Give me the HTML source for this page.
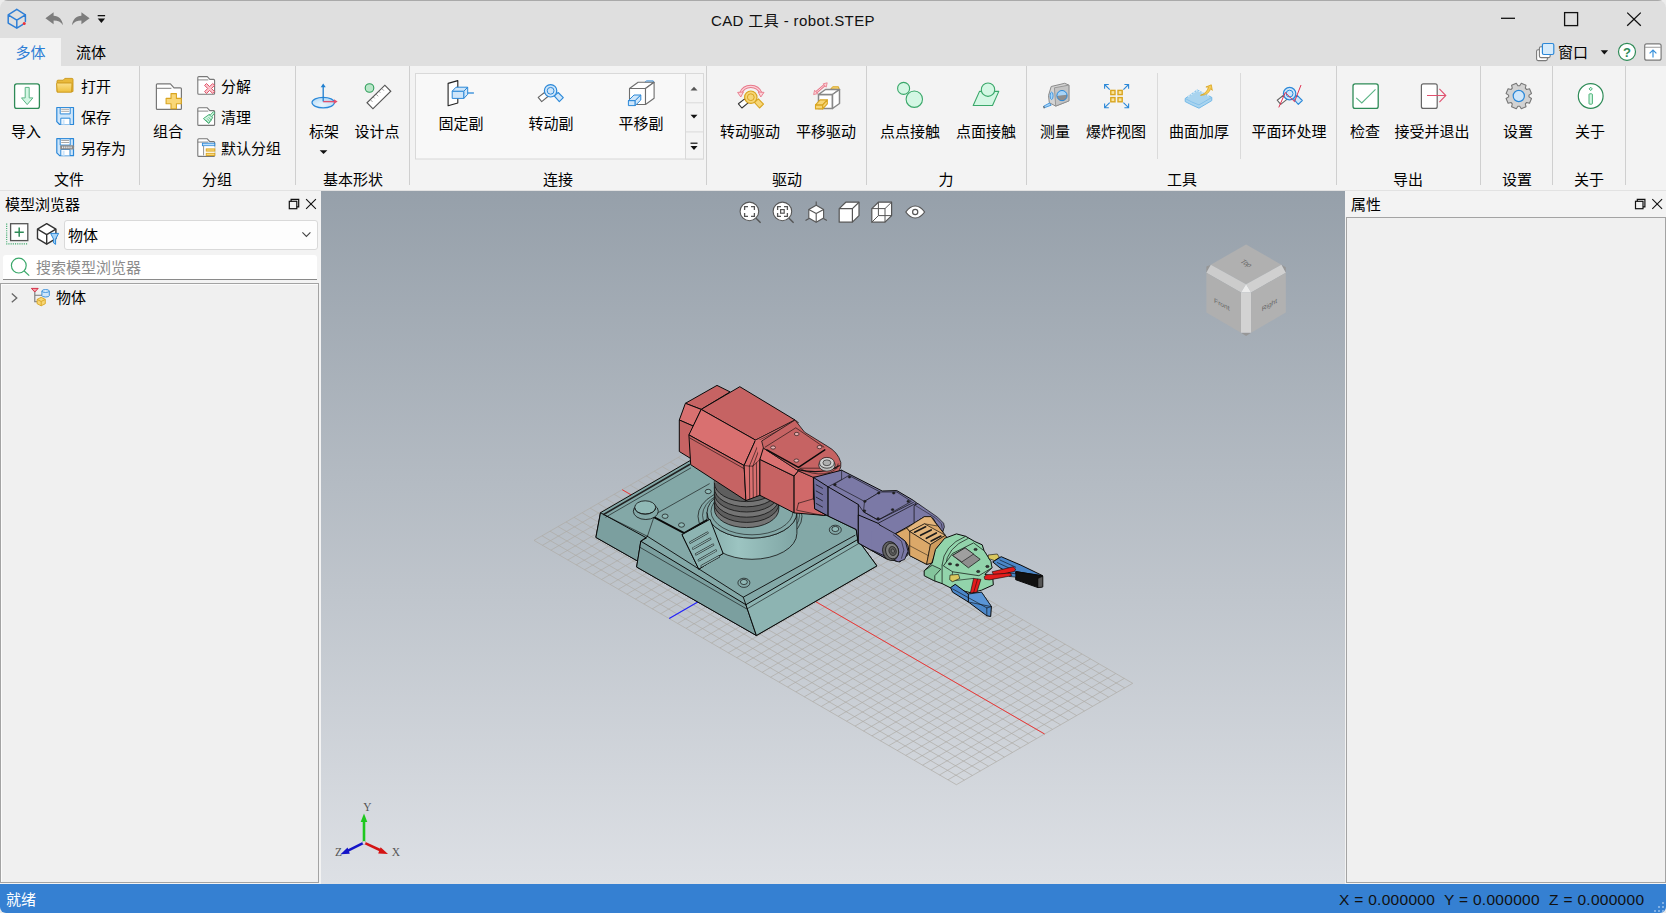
<!DOCTYPE html>
<html lang="zh-CN">
<head>
<meta charset="utf-8">
<title>CAD 工具 - robot.STEP</title>
<style>
*{box-sizing:border-box;margin:0;padding:0}
html{width:1666px;height:913px;overflow:hidden;background:#ececec}
body{width:1666px;height:913px;overflow:hidden;background:#f3f3f3;clip-path:inset(0 round 8px 8px 6px 6px)}
body{font-family:"Liberation Sans","Noto Sans CJK SC",sans-serif;font-size:15px;color:#000;position:relative}
.abs{position:absolute}
#titlebar{left:0;top:0;width:1666px;height:66px;background:#dfdfdf}
#topline{left:0;top:0;width:1666px;height:1px;background:#a9a9a9}
#title{left:711px;top:10px;letter-spacing:0.38px;width:161px;height:22px;line-height:22px;font-size:15px;text-align:center;white-space:nowrap;color:#111}
#tab1{left:0;top:38px;width:61px;height:28px;padding-top:1px;background:#f3f3f3;color:#2f7fd6;text-align:center;line-height:28px}
#tab2{left:61px;top:38px;width:60px;height:28px;padding-top:1px;text-align:center;line-height:28px}
#ribbon{left:0;top:66px;width:1666px;height:124px;background:#f3f3f3}
#ribline{left:0;top:190px;width:1666px;height:1px;background:#e2e2e2}
.sep{position:absolute;top:66px;width:1px;height:119px;background:#cfcfcf}
.sep2{position:absolute;top:73px;width:1px;height:86px;background:#dadada}
.lbl{position:absolute;white-space:nowrap;line-height:20px;height:20px;transform:translateX(-50%);text-align:center}
.sl{position:absolute;white-space:nowrap;line-height:20px;height:20px}
.ic{position:absolute;overflow:visible}
#leftp{left:0;top:191px;width:321px;height:693px;background:#f3f3f3}
#rightp{left:1346px;top:191px;width:320px;height:693px;background:#f3f3f3}
#view{left:321px;top:191px;width:1024px;height:693px;background:linear-gradient(#96a0aa,#dde0e5);overflow:hidden}
#status{left:0;top:884px;width:1666px;height:29px;background:#3580d2;color:#fff}
</style>
</head>
<body>
<div id="titlebar" class="abs"></div>
<div id="topline" class="abs"></div>
<div id="title" class="abs">CAD 工具 - robot.STEP</div>
<div id="tab1" class="abs">多体</div>
<div id="tab2" class="abs">流体</div>
<div id="ribbon" class="abs"></div>
<div id="ribline" class="abs"></div>
<!--RIBBON-->
<!--RIBBON-ICONS-->
<svg class="abs" style="left:0;top:0" width="1666" height="191" viewBox="0 0 1666 191">
<g fill="none" stroke="#2f7fd6" stroke-width="1.5" stroke-linejoin="round" stroke-linecap="round"><path d="M16.8 9.4l8.6 5.5v6.5M22.6 24.6l-5.800 3.600l-8.600-5.100v-8.200l8.600-5.500M8.200 14.900l8.600 5.300l8.600-5.300M16.800 20.200v8"/></g><circle cx="24.200" cy="23.500" r="1.500" fill="#e8303a"/>
<path d="M45.400 18.200l8.200-6v3.600c5.200 0.200 8.600 3.600 9.400 9.400c-2.200-3.400-5-4.800-9.400-4.800v3.800z" fill="#7d7d7d"/>
<path d="M89.600 18.200l-8.200-6v3.600c-5.200 0.200-8.600 3.600-9.400 9.400c2.200-3.400 5-4.800 9.400-4.800v3.800z" fill="#7d7d7d"/>
<rect x="97.700" y="15" width="7.400" height="1.300" fill="#111"/><path d="M97.700 18.600h7.400l-3.700 4.400z" fill="#111"/>
<path d="M1501 18.300h14" stroke="#111" stroke-width="1.300"/>
<rect x="1564.600" y="12.600" width="13" height="13" fill="none" stroke="#111" stroke-width="1.300"/>
<path d="M1627.200 12.600l13.600 13.200M1640.800 12.600l-13.600 13.200" stroke="#111" stroke-width="1.300"/>
<g stroke="#7a7a7a" fill="#fff" stroke-width="1.100"><rect x="1536.600" y="49.800" width="10.800" height="10.800" rx="1.500"/><rect x="1539.400" y="46.800" width="10.800" height="10.800" rx="1.500"/></g>
<rect x="1542.400" y="43.500" width="11.400" height="11" rx="1.500" fill="#d6ebfb" stroke="#2b88d8" stroke-width="1.200"/>
<path d="M1600.700 50.200h7.400l-3.700 4.200z" fill="#111"/>
<circle cx="1627" cy="51.800" r="8.500" fill="#fff" stroke="#2e8b57" stroke-width="1.200"/>
<text x="1627" y="56.600" font-family="Liberation Sans, sans-serif" font-weight="bold" font-size="13" fill="#2e8b57" text-anchor="middle">?</text>
<rect x="1644.700" y="43.800" width="16.400" height="16.400" rx="2" fill="#fff" stroke="#7a7a7a" stroke-width="1.200"/><path d="M1645 47.200h16" stroke="#9a9a9a" stroke-width="1.100"/>
<path d="M1653 57.500v-7.500M1649.600 53.400l3.400-3.400l3.400 3.400" fill="none" stroke="#3a92dc" stroke-width="1.200"/>
<rect x="14.600" y="83.800" width="24.800" height="24.600" rx="2.200" fill="#fff" stroke="#2e8b57" stroke-width="1.300"/>
<path d="M25.200 87.400h4v10.500h3.700l-5.700 6.700l-5.700-6.700h3.700z" fill="#d4f7e4" stroke="#5cb586" stroke-width="1"/>
<defs><linearGradient id="fg" x1="0" y1="0" x2="0" y2="1"><stop offset="0" stop-color="#fbe08a"/><stop offset="1" stop-color="#eebf3c"/></linearGradient></defs>
<path d="M57 91.600v-10.400q0-1 1-1h5.200l1.600-1.800h7.200q1 0 1 1v12.200z" fill="#e9b93a" stroke="#c9961a" stroke-width="0.900"/><path d="M57.200 92.200l-0.600-8.400q0-0.800 0.800-0.800h13.800q0.800 0 0.800 0.800l-0.400 8.400z" fill="url(#fg)" stroke="#c9961a" stroke-width="0.900"/>
<path d="M56.800 107.5h16.700v17h-13.900l-2.800-2.800z" fill="#cfe6fa" stroke="#2b88d8" stroke-width="1.200" stroke-linejoin="round"/>
<path d="M60.200 107.6h10v6.300h-10z" fill="#fff" stroke="#2b88d8" stroke-width="1"/><path d="M61.200 109.3h8M61.200 111.3h8" stroke="#a8a8a8" stroke-width="1"/>
<path d="M60.800 124.4v-6.200h9.200v6.200" fill="#fff" stroke="#2b88d8" stroke-width="1"/><rect x="62.600" y="119.6" width="2" height="4.800" fill="#cfe6fa"/>
<path d="M56.800 138.7h16.700v17h-13.900l-2.800-2.800z" fill="#cfe6fa" stroke="#2b88d8" stroke-width="1.200" stroke-linejoin="round"/>
<path d="M60.200 138.79999999999998h10v6.300h-10z" fill="#fff" stroke="#2b88d8" stroke-width="1"/><path d="M61.200 140.5h8M61.200 142.5h8" stroke="#a8a8a8" stroke-width="1"/>
<path d="M60.800 155.6v-6.200h9.200v6.200" fill="#fff" stroke="#2b88d8" stroke-width="1"/><rect x="62.600" y="150.79999999999998" width="2" height="4.800" fill="#cfe6fa"/>
<rect x="60.200" y="145.2" width="13.800" height="4.400" rx="1" fill="#8a8a8a"/><path d="M62 147.39999999999998h10.500" stroke="#e8e8e8" stroke-width="1.600" stroke-dasharray="1.300 0.800"/>
<path d="M156.4 108.4v-23.6q0-1 1-1h13l3.6 4h6.4q1 0 1 1v19.6q0 1-1 1h-23q-1 0-1-1z" fill="#fff" stroke="#777" stroke-width="1.2" stroke-linejoin="round"/><path d="M156.4 88.3h15" stroke="#777" stroke-width="0.96" fill="none"/>
<path d="M171 93.600h5.400v4.800h4.900v5.400h-4.900v4.900h-5.400v-4.900h-4.900v-5.400h4.900z" fill="#f9d778" stroke="#d9a520" stroke-width="1.100" stroke-linejoin="round"/>
<path d="M197.8 93.19999999999999v-15.600000000000001q0-1 1-1h8.5l2.5 2.8h3.8q1 0 1 1v12.8q0 1-1 1h-14.8q-1 0-1-1z" fill="#fff" stroke="#777" stroke-width="1.1" stroke-linejoin="round"/><path d="M197.8 79.89999999999999h10.5" stroke="#777" stroke-width="0.88" fill="none"/>
<path d="M204.600 85.400l1.900-1.900l3.100 3.100l3.100-3.100l1.900 1.900l-3.100 3.100l3.100 3.100l-1.900 1.900l-3.100-3.100l-3.100 3.100l-1.900-1.900l3.100-3.100z" fill="#f9c6cd" stroke="#e0455e" stroke-width="0.900" stroke-linejoin="round"/>
<path d="M197.8 124.4v-15.600000000000001q0-1 1-1h8.5l2.5 2.8h3.8q1 0 1 1v12.8q0 1-1 1h-14.8q-1 0-1-1z" fill="#fff" stroke="#777" stroke-width="1.1" stroke-linejoin="round"/><path d="M197.8 111.1h10.5" stroke="#777" stroke-width="0.88" fill="none"/>
<path d="M203.400 118.600l5.600-4l1.400 0.300l3-3.200l1.400 1.200l-2.800 3.400l0.600 1.400l-3.800 5.800z" fill="#d4f7e4" stroke="#3aa86a" stroke-width="0.900" stroke-linejoin="round"/><path d="M205.400 119.600l3.200 3.400M207 118.400l3 3.400M208.600 117.200l2.800 3.200M209 114.600l3.200 2.800" stroke="#3aa86a" stroke-width="0.700"/>
<path d="M197.8 155.4v-15.600000000000001q0-1 1-1h8.5l2.5 2.8h3.8q1 0 1 1v12.8q0 1-1 1h-14.8q-1 0-1-1z" fill="#fff" stroke="#777" stroke-width="1.1" stroke-linejoin="round"/><path d="M197.8 142.10000000000002h10.5" stroke="#777" stroke-width="0.88" fill="none"/>
<rect x="202.400" y="143.200" width="12.400" height="2.600" fill="#bfe0fa" stroke="#2b88d8" stroke-width="0.900"/><rect x="202.400" y="146.400" width="12.400" height="9" fill="#fff"/><path d="M203.600 146v9.400" stroke="#777" stroke-width="0.800"/>
<rect x="206.200" y="148.900" width="8.600" height="2.200" fill="#f9d778" stroke="#d9a520" stroke-width="0.900"/><rect x="206.200" y="153.300" width="8.600" height="2.200" fill="#f9d778" stroke="#d9a520" stroke-width="0.900"/>
<defs><radialGradient id="eg" cx="0.45" cy="0.700" r="0.700"><stop offset="0" stop-color="#eaf5fd"/><stop offset="1" stop-color="#b4dbf7"/></radialGradient></defs>
<ellipse cx="323.200" cy="102.600" rx="11.200" ry="5.300" fill="url(#eg)" stroke="#2b88d8" stroke-width="1.200"/>
<path d="M323.200 101.600v-15.500" stroke="#1f7fd0" stroke-width="1.300"/><path d="M320.700 87.200h5l-2.500-3.800z" fill="#1f7fd0"/>
<path d="M323.200 101.600h11.500" stroke="#e0506e" stroke-width="1.400"/><path d="M334 99.200v4.800l3.600-2.400z" fill="#e0506e"/>
<path d="M319.700 150.200h7.700l-3.850 3.900z" fill="#111"/>
<circle cx="369.500" cy="88" r="4.300" fill="#b8e6c8" stroke="#2e9e5a" stroke-width="1.100"/>
<g transform="translate(378.900 97) rotate(-44.600)"><rect x="-12.500" y="-4.200" width="25" height="8.400" fill="#fff" stroke="#555" stroke-width="1.200"/><path d="M-8 -4v3M-4 -4v2M0 -4v3M4 -4v2M8 -4v3" stroke="#777" stroke-width="0.700"/></g>
<rect x="415.500" y="73.500" width="288" height="85.500" fill="#f8f8f8" stroke="#d9d9d9" stroke-width="1"/>
<rect x="685.500" y="73.500" width="18" height="85.500" fill="#f4f4f4" stroke="#d9d9d9" stroke-width="1"/><path d="M685.500 102.800h18M685.500 131.900h18" stroke="#d9d9d9" stroke-width="1"/>
<path d="M690.500 90.400h7l-3.500-3.600z" fill="#555"/><path d="M690.500 114.800h7l-3.500 3.600z" fill="#111"/><rect x="690.500" y="142.600" width="7" height="1.200" fill="#111"/><path d="M690.500 146.100h7l-3.500 3.800z" fill="#111"/>
<path d="M448.100 83.400l9.700-2.800v22.400l-9.700 2.800z" fill="#fff" stroke="#222" stroke-width="1.100" stroke-linejoin="round"/>
<g fill="#cfe6fa" stroke="#2b88d8" stroke-width="1" stroke-linejoin="round"><path d="M452.200 91.200h11.700v7.200h-11.700z"/><path d="M452.200 91.200l3.800-4h11.700l-3.800 4z"/><path d="M463.900 91.200l3.800-4v7.100l-3.800 4.100z"/><path d="M467.700 93h6.200" stroke-width="1.300"/></g>
<path d="M538.2 97.39999999999999l6.300-4.900l3.400 4l-6.200 5.100z" fill="#fff" stroke="#666" stroke-width="1.100" stroke-linejoin="round"/>
<path d="M554.2 95.89999999999999l4-3.400l5.100 5.200l-4 3.900z" fill="#cfe6fa" stroke="#2b88d8" stroke-width="1.100" stroke-linejoin="round"/>
<circle cx="550.6" cy="90.8" r="6.200" fill="#cfe6fa" stroke="#2b88d8" stroke-width="1.200"/><circle cx="550.6" cy="90.8" r="3.400" fill="#cfe6fa" stroke="#2b88d8" stroke-width="1"/>
<path d="M644.800 82.400l1.800-1.500h6.600l0.600 2.200z" fill="#cfe6fa" stroke="#2b88d8" stroke-width="0.900"/>
<g fill="#fff" stroke="#6e6e6e" stroke-width="1.1" stroke-linejoin="round"><path d="M629.5 88.5h16v16h-16z"/><path d="M629.5 88.5l8.6 -6.2h16l-8.6 6.2z"/><path d="M645.5 88.5l8.6 -6.2v16l-8.6 6.2z"/></g>
<g fill="#cfe6fa" stroke="#2b88d8" stroke-width="1" stroke-linejoin="round"><path d="M628.4 100.6h6.8v5h-6.8z"/><path d="M628.4 100.6l5.6 -5.6h6.8l-5.6 5.6z"/><path d="M635.1999999999999 100.6l5.6 -5.6v5l-5.6 5.6z"/></g>
<path d="M740.600 93.400a10.900 10.900 0 0 1 20.400 0" fill="none" stroke="#e8788a" stroke-width="3.200"/><path d="M740.600 93.400a10.900 10.900 0 0 1 20.400 0" fill="none" stroke="#fbd3d8" stroke-width="1.400"/>
<path d="M737.600 92.400l5.800-0.400l-2.600 5z" fill="#fbd3d8" stroke="#e8788a" stroke-width="0.900"/><path d="M764 92.400l-5.800-0.400l2.600 5z" fill="#fbd3d8" stroke="#e8788a" stroke-width="0.900"/>
<path d="M738.4 103.8l6.300-4.900l3.400 4l-6.200 5.100z" fill="#fff" stroke="#333" stroke-width="1.100" stroke-linejoin="round"/>
<path d="M754.4 102.3l4-3.400l5.100 5.200l-4 3.900z" fill="#f7d677" stroke="#d9a520" stroke-width="1.100" stroke-linejoin="round"/>
<circle cx="750.8" cy="97.2" r="6.200" fill="#f7d677" stroke="#d9a520" stroke-width="1.200"/><circle cx="750.8" cy="97.2" r="3.400" fill="#f7d677" stroke="#d9a520" stroke-width="1"/>
<path d="M830.800 89l1.800-2.200h5.900l0.700 2.700z" fill="#f7d677" stroke="#d9a520" stroke-width="1"/>
<g fill="#fff" stroke="#888" stroke-width="1.5" stroke-linejoin="round"><path d="M818.5 94.5h14v14h-14z"/><path d="M818.5 94.5l7 -5h14l-7 5z"/><path d="M832.5 94.5l7 -5v14l-7 5z"/></g>
<g fill="#f7d677" stroke="#d9a520" stroke-width="1.1" stroke-linejoin="round"><path d="M815.5 104.9h7.2v4h-7.2z"/><path d="M815.5 104.9l4.6 -5h7.2l-4.6 5z"/><path d="M822.7 104.9l4.6 -5v4l-4.6 5z"/></g>
<path d="M815.400 93l10-8.600" stroke="#e8788a" stroke-width="2.600"/><path d="M815.400 93l10-8.600" stroke="#fbd3d8" stroke-width="1"/><path d="M813.600 94.600l1-4.400l3 3.400z" fill="#fbd3d8" stroke="#e8788a" stroke-width="0.800"/><path d="M827.200 82.800l-1 4.400l-3-3.400z" fill="#fbd3d8" stroke="#e8788a" stroke-width="0.800"/>
<circle cx="903.600" cy="88.400" r="6" fill="#d4f7e4" stroke="#3aa86a" stroke-width="1.100"/><circle cx="914.300" cy="99.200" r="8.200" fill="#d4f7e4" stroke="#3aa86a" stroke-width="1.100"/>
<path d="M973.200 105.500l6.300-14.100h19.300l-6.300 14.100z" fill="#d4f7e4" stroke="#3aa86a" stroke-width="1.100" stroke-linejoin="round"/><circle cx="988" cy="89.700" r="6.700" fill="#d4f7e4" stroke="#3aa86a" stroke-width="1.100"/>
<path d="M1048.500 95.500l2.700-9l13.500-3.200l4.200 1.800v15.800l-13.200 5.200l-6.400-3.400z" fill="#d4d4d4" stroke="#8a8a8a" stroke-width="1" stroke-linejoin="round"/>
<path d="M1054.400 87.800l14.500-2.700v15.800l-13.200 5.200z" fill="#c4c4c4" stroke="#8a8a8a" stroke-width="0.800" stroke-linejoin="round"/>
<circle cx="1062" cy="95.600" r="5.100" fill="#8e8e8e"/><path d="M1056.900 95.900a5.100 5.100 0 0 1 10.200-1.200q-5 0.200-10.200 1.200z" fill="#a8d4f7"/><circle cx="1062" cy="95.600" r="5.100" fill="none" stroke="#2b88d8" stroke-width="1"/>
<ellipse cx="1051.600" cy="95.800" rx="1.500" ry="3.700" fill="#a8d4f7" stroke="#2b88d8" stroke-width="0.800"/>
<path d="M1049.600 103l-6 3.200l0.600 1.600l7-2.600z" fill="#a8d4f7" stroke="#2b88d8" stroke-width="0.800"/><path d="M1043.600 106.200l0.800 2" stroke="#666" stroke-width="1.200"/>
<rect x="1110.8" y="90.4" width="4.200" height="4.200" fill="#fbe49a" stroke="#d9a520" stroke-width="1.400"/>
<rect x="1118" y="90.4" width="4.200" height="4.200" fill="#fbe49a" stroke="#d9a520" stroke-width="1.400"/>
<rect x="1110.8" y="97.6" width="4.200" height="4.200" fill="#fbe49a" stroke="#d9a520" stroke-width="1.400"/>
<rect x="1118" y="97.6" width="4.200" height="4.200" fill="#fbe49a" stroke="#d9a520" stroke-width="1.400"/>
<path d="M1109.7 89.6L1104.6 84.5M1108.8 84.5H1104.6V88.7" fill="none" stroke="#2b88d8" stroke-width="1.100"/>
<path d="M1123.4 89.6L1128.6 84.5M1124.3999999999999 84.5H1128.6V88.7" fill="none" stroke="#2b88d8" stroke-width="1.100"/>
<path d="M1109.7 102.6L1104.6 107.7M1108.8 107.7H1104.6V103.5" fill="none" stroke="#2b88d8" stroke-width="1.100"/>
<path d="M1123.4 102.6L1128.6 107.7M1124.3999999999999 107.7H1128.6V103.5" fill="none" stroke="#2b88d8" stroke-width="1.100"/>
<path d="M1185.200 98.500l12-8.600q6 3.200 14.600 7.500v3.200l-12.800 7.600q-7-3-13.800-6.600z" fill="#a9d4ef" stroke="#6ab4e6" stroke-width="0.900" stroke-linejoin="round"/>
<path d="M1185.200 98.500q6.400 3.800 13.800 6.400l12.800-7.500" fill="none" stroke="#7cbde8" stroke-width="0.800"/><path d="M1188 96.600l9.300-6.400l11.500 6" fill="none" stroke="#d9edfa" stroke-width="1.200" stroke-dasharray="2 1.200"/>
<path d="M1200.500 95.300q6.500-2 8-8.300h-2.600l5.400-2.200l1 5.600l-1.600-1.800q-2 6.600-10.200 6.700z" fill="#f7cc55" stroke="#d9a520" stroke-width="0.800" stroke-linejoin="round"/>
<path d="M1277.1999999999998 100.19999999999999l6.300-4.900l3.400 4l-6.200 5.100z" fill="#fff" stroke="#666" stroke-width="1.100" stroke-linejoin="round"/>
<path d="M1293.1999999999998 98.69999999999999l4-3.400l5.100 5.200l-4 3.900z" fill="#cfe6fa" stroke="#2b88d8" stroke-width="1.100" stroke-linejoin="round"/>
<circle cx="1289.6" cy="93.6" r="6.200" fill="#cfe6fa" stroke="#2b88d8" stroke-width="1.200"/><circle cx="1289.6" cy="93.6" r="3.400" fill="#cfe6fa" stroke="#2b88d8" stroke-width="1"/>
<path d="M1278.800 107.400l6.500-14.900l9.200 9.200l6.500-16.700" fill="none" stroke="#e03050" stroke-width="1"/>
<rect x="1353" y="83.800" width="25.200" height="24.600" rx="2.200" fill="#fff" stroke="#2e8b57" stroke-width="1.300"/><path d="M1356.200 97.800l5.600 5.200l13.700-13.600" fill="none" stroke="#5cb586" stroke-width="1.100"/>
<rect x="1421.400" y="83.800" width="15.800" height="24.600" rx="2" fill="#fff" stroke="#666" stroke-width="1.200"/><path d="M1427 95.500h18.300M1439.400 88.800l6.400 6.700l-6.400 6.700" fill="none" stroke="#e0506e" stroke-width="1.100"/>
<path d="M1531.5 98.5L1529.5 103.2L1526.6 102.5L1525.3 103.8L1526.0 106.7L1521.3 108.7L1519.7 106.2L1517.9 106.2L1516.3 108.7L1511.6 106.7L1512.3 103.8L1511.0 102.5L1508.1 103.2L1506.1 98.5L1508.6 96.9L1508.6 95.1L1506.1 93.5L1508.1 88.8L1511.0 89.5L1512.3 88.2L1511.6 85.3L1516.3 83.3L1517.9 85.8L1519.7 85.8L1521.3 83.3L1526.0 85.3L1525.3 88.2L1526.6 89.5L1529.5 88.8L1531.5 93.5L1529.0 95.1L1529.0 96.9Z" fill="#d2d2d2" stroke="#777" stroke-width="1.100" stroke-linejoin="round"/><circle cx="1518.800" cy="96" r="5.600" fill="#cfe6fa" stroke="#2b88d8" stroke-width="1.200"/>
<circle cx="1590.700" cy="96" r="12.400" fill="#fff" stroke="#2e8b57" stroke-width="1.200"/><rect x="1589" y="93.800" width="3.400" height="10.400" rx="0.800" fill="#d4f7e4" stroke="#3aa86a" stroke-width="0.900"/><path d="M1590.700 87.200l1.600 1.700l-1.600 1.700l-1.600-1.700z" fill="#d4f7e4" stroke="#3aa86a" stroke-width="0.900"/>
</svg>
<!--/RIBBON-ICONS-->
<div class="sep" style="left:139px"></div>
<div class="sep" style="left:295px"></div>
<div class="sep" style="left:409px"></div>
<div class="sep" style="left:706px"></div>
<div class="sep" style="left:866px"></div>
<div class="sep" style="left:1026px"></div>
<div class="sep" style="left:1336px"></div>
<div class="sep" style="left:1480px"></div>
<div class="sep" style="left:1552px"></div>
<div class="sep" style="left:1625px"></div>
<div class="sep2" style="left:1157px"></div>
<div class="sep2" style="left:1240px"></div>
<div class="lbl" style="left:26px;top:122px">导入</div>
<div class="lbl" style="left:168px;top:122px">组合</div>
<div class="lbl" style="left:324px;top:122px">标架</div>
<div class="lbl" style="left:377px;top:122px">设计点</div>
<div class="lbl" style="left:750px;top:122px">转动驱动</div>
<div class="lbl" style="left:826px;top:122px">平移驱动</div>
<div class="lbl" style="left:910px;top:122px">点点接触</div>
<div class="lbl" style="left:986px;top:122px">点面接触</div>
<div class="lbl" style="left:1055px;top:122px">测量</div>
<div class="lbl" style="left:1116px;top:122px">爆炸视图</div>
<div class="lbl" style="left:1199px;top:122px">曲面加厚</div>
<div class="lbl" style="left:1289px;top:122px">平面环处理</div>
<div class="lbl" style="left:1365px;top:122px">检查</div>
<div class="lbl" style="left:1432px;top:122px">接受并退出</div>
<div class="lbl" style="left:1518px;top:122px">设置</div>
<div class="lbl" style="left:1590px;top:122px">关于</div>
<div class="lbl" style="left:461px;top:114px">固定副</div>
<div class="lbl" style="left:551px;top:114px">转动副</div>
<div class="lbl" style="left:641px;top:114px">平移副</div>
<div class="sl" style="left:81px;top:77px">打开</div>
<div class="sl" style="left:81px;top:108px">保存</div>
<div class="sl" style="left:81px;top:139px">另存为</div>
<div class="sl" style="left:221px;top:77px">分解</div>
<div class="sl" style="left:221px;top:108px">清理</div>
<div class="sl" style="left:221px;top:139px">默认分组</div>
<div class="lbl" style="left:69px;top:170px">文件</div>
<div class="lbl" style="left:217px;top:170px">分组</div>
<div class="lbl" style="left:353px;top:170px">基本形状</div>
<div class="lbl" style="left:558px;top:170px">连接</div>
<div class="lbl" style="left:787px;top:170px">驱动</div>
<div class="lbl" style="left:946px;top:170px">力</div>
<div class="lbl" style="left:1182px;top:170px">工具</div>
<div class="lbl" style="left:1408px;top:170px">导出</div>
<div class="lbl" style="left:1517px;top:170px">设置</div>
<div class="lbl" style="left:1589px;top:170px">关于</div>
<div id="leftp" class="abs"></div>
<div id="rightp" class="abs"></div>
<div id="view" class="abs">
<!--VIEW-->
<svg class="abs" style="left:0;top:0" width="1025" height="693" viewBox="321 191 1025 693"><defs><linearGradient id="pedg" x1="0" x2="1"><stop offset="0" stop-color="#86adab"/><stop offset="0.35" stop-color="#9cc4c1"/><stop offset="1" stop-color="#7fa5a4"/></linearGradient></defs>
<path d="M534.00 540.40L956.40 784.70M542.01 535.79L964.41 780.09M550.03 531.18L972.43 775.48M558.04 526.57L980.44 770.87M566.05 521.96L988.45 766.26M574.07 517.35L996.47 761.65M582.08 512.75L1004.48 757.05M590.10 508.14L1012.50 752.44M598.11 503.53L1020.51 747.83M606.12 498.92L1028.52 743.22M614.14 494.31L1036.54 738.61M622.15 489.70L1044.55 734.00M630.16 485.09L1052.56 729.39M638.18 480.48L1060.58 724.78M646.19 475.87L1068.59 720.17M654.20 471.26L1076.60 715.56M662.22 466.65L1084.62 710.95M670.23 462.05L1092.63 706.35M678.25 457.44L1100.65 701.74M686.26 452.83L1108.66 697.13M694.27 448.22L1116.67 692.52M702.29 443.61L1124.69 687.91M710.30 439.00L1132.70 683.30M534.00 540.40L710.30 439.00M542.45 545.29L718.75 443.89M550.90 550.17L727.20 448.77M559.34 555.06L735.64 453.66M567.79 559.94L744.09 458.54M576.24 564.83L752.54 463.43M584.69 569.72L760.99 468.32M593.14 574.60L769.44 473.20M601.58 579.49L777.88 478.09M610.03 584.37L786.33 482.97M618.48 589.26L794.78 487.86M626.93 594.15L803.23 492.75M635.38 599.03L811.68 497.63M643.82 603.92L820.12 502.52M652.27 608.80L828.57 507.40M660.72 613.69L837.02 512.29M669.17 618.58L845.47 517.18M677.62 623.46L853.92 522.06M686.06 628.35L862.36 526.95M694.51 633.23L870.81 531.83M702.96 638.12L879.26 536.72M711.41 643.01L887.71 541.61M719.86 647.89L896.16 546.49M728.30 652.78L904.60 551.38M736.75 657.66L913.05 556.26M745.20 662.55L921.50 561.15M753.65 667.44L929.95 566.04M762.10 672.32L938.40 570.92M770.54 677.21L946.84 575.81M778.99 682.09L955.29 580.69M787.44 686.98L963.74 585.58M795.89 691.87L972.19 590.47M804.34 696.75L980.64 595.35M812.78 701.64L989.08 600.24M821.23 706.52L997.53 605.12M829.68 711.41L1005.98 610.01M838.13 716.30L1014.43 614.90M846.58 721.18L1022.88 619.78M855.02 726.07L1031.32 624.67M863.47 730.95L1039.77 629.55M871.92 735.84L1048.22 634.44M880.37 740.73L1056.67 639.33M888.82 745.61L1065.12 644.21M897.26 750.50L1073.56 649.10M905.71 755.38L1082.01 653.98M914.16 760.27L1090.46 658.87M922.61 765.16L1098.91 663.76M931.06 770.04L1107.36 668.64M939.50 774.93L1115.80 673.53M947.95 779.81L1124.25 678.41M956.40 784.70L1132.70 683.30" fill="none" stroke="#aeaaa5" stroke-opacity="0.85" stroke-width="0.8"/>
<path d="M622.2 489.7L1044.6 734.0" stroke="#f02828" stroke-width="0.9" fill="none"/>
<path d="M669.2 618.6L701.2 600.1" stroke="#2020ff" stroke-width="1.1" fill="none"/>
<polygon points="595.9,537.4 600.5,512.7 687.9,461.9 708.5,450.5 855.0,535.3 857.6,539.6 876.9,565.9 756.4,635.5 636.6,567.0 637.7,561.1" fill="#83a8a7" stroke="#0a0a0a" stroke-width="1.0" stroke-linejoin="round" />
<polygon points="790.0,496.0 862.0,530.0 856.0,540.0 790.0,515.0" fill="#83a8a7" stroke="#0a0a0a" stroke-width="0" stroke-linejoin="round" />
<polygon points="595.9,537.4 600.5,512.7 646.5,537.9 640.8,541.2 637.7,561.1" fill="#7b9f9f" stroke="#0a0a0a" stroke-width="1.0" stroke-linejoin="round" />
<polygon points="640.8,541.2 636.6,567.0 756.4,635.5 745.9,604.7" fill="#7b9f9f" stroke="#0a0a0a" stroke-width="1.0" stroke-linejoin="round" />
<polygon points="745.9,604.7 756.4,635.5 876.9,565.9 857.6,539.6" fill="#8db4b2" stroke="#0a0a0a" stroke-width="1.0" stroke-linejoin="round" />
<polyline points="647.4,536.3 743.3,597.2 855.0,535.3" fill="none" stroke="#0a0a0a" stroke-width="0.9" stroke-linecap="round" stroke-linejoin="round" />
<polyline points="640.8,541.2 647.4,536.3" fill="none" stroke="#0a0a0a" stroke-width="0.9" stroke-linecap="round" stroke-linejoin="round" />
<polyline points="743.3,597.2 745.9,604.7" fill="none" stroke="#0a0a0a" stroke-width="0.9" stroke-linecap="round" stroke-linejoin="round" />
<polyline points="639.9,547.3 746.8,609.0 859.8,542.9" fill="none" stroke="#0a0a0a" stroke-width="0.6" stroke-linecap="round" stroke-linejoin="round" />
<polyline points="603.6,514.5 689.6,464.5" fill="none" stroke="#222" stroke-width="1.6" stroke-linecap="round" stroke-linejoin="round" />
<polyline points="605.8,517.1 655.7,488.2 690.7,468.0" fill="none" stroke="#0a0a0a" stroke-width="0.6" stroke-linecap="round" stroke-linejoin="round" />
<polyline points="603.6,514.5 647.4,536.3" fill="none" stroke="#0a0a0a" stroke-width="0.6" stroke-linecap="round" stroke-linejoin="round" />
<polygon points="682.0,534.6 710.0,519.3 723.1,553.4 698.8,569.2" fill="#8db4b2" stroke="#0a0a0a" stroke-width="1.0" stroke-linejoin="round" />
<polyline points="690.3,542.5 707.4,532.8" fill="none" stroke="#222" stroke-width="2.3" stroke-linecap="round" stroke-linejoin="round" />
<polyline points="690.3,542.5 707.4,532.8" fill="none" stroke="#8db4b2" stroke-width="1.3" stroke-linecap="round" stroke-linejoin="round" />
<polyline points="693.1,548.4 710.2,538.8" fill="none" stroke="#222" stroke-width="2.3" stroke-linecap="round" stroke-linejoin="round" />
<polyline points="693.1,548.4 710.2,538.8" fill="none" stroke="#8db4b2" stroke-width="1.3" stroke-linecap="round" stroke-linejoin="round" />
<polyline points="696.0,554.3 713.1,544.7" fill="none" stroke="#222" stroke-width="2.3" stroke-linecap="round" stroke-linejoin="round" />
<polyline points="696.0,554.3 713.1,544.7" fill="none" stroke="#8db4b2" stroke-width="1.3" stroke-linecap="round" stroke-linejoin="round" />
<polyline points="698.8,560.2 715.9,550.6" fill="none" stroke="#222" stroke-width="2.3" stroke-linecap="round" stroke-linejoin="round" />
<polyline points="698.8,560.2 715.9,550.6" fill="none" stroke="#8db4b2" stroke-width="1.3" stroke-linecap="round" stroke-linejoin="round" />
<polyline points="701.7,566.1 718.8,556.5" fill="none" stroke="#222" stroke-width="2.3" stroke-linecap="round" stroke-linejoin="round" />
<polyline points="701.7,566.1 718.8,556.5" fill="none" stroke="#8db4b2" stroke-width="1.3" stroke-linecap="round" stroke-linejoin="round" />
<polyline points="653.9,517.1 684.2,533.1 710.0,518.4" fill="none" stroke="#0a0a0a" stroke-width="1.8" stroke-linecap="round" stroke-linejoin="round" />
<polyline points="655.7,514.0 709.3,483.8" fill="none" stroke="#0a0a0a" stroke-width="0.6" stroke-linecap="round" stroke-linejoin="round" />
<polyline points="647.4,536.3 653.9,517.1" fill="none" stroke="#0a0a0a" stroke-width="0.6" stroke-linecap="round" stroke-linejoin="round" />
<ellipse cx="645.8" cy="511.2" rx="12.5" ry="8.3" fill="#83a8a7" stroke="#111" stroke-width="0.8"/>
<ellipse cx="645.2" cy="507.4" rx="10.5" ry="6.6" fill="#90b9b6" stroke="#111" stroke-width="0.8"/>
<path d="M634.7 507.6A10.5 6.6 0 0 0 655.7 507.6" fill="none" stroke="#111" stroke-width="0.7"/>
<ellipse cx="665.1" cy="516.2" rx="3.0" ry="2.2" fill="#90b9b6" stroke="#111" stroke-width="0.7"/>
<ellipse cx="681.5" cy="525.0" rx="3.0" ry="2.2" fill="#90b9b6" stroke="#111" stroke-width="0.7"/>
<ellipse cx="708.2" cy="491.5" rx="3.0" ry="2.2" fill="#90b9b6" stroke="#111" stroke-width="0.7"/>
<ellipse cx="743.9" cy="582.8" rx="6.0" ry="4.6" fill="#83a8a7" stroke="#111" stroke-width="0.7"/>
<ellipse cx="743.9" cy="582.0" rx="3.5" ry="2.6" fill="#90b9b6" stroke="#111" stroke-width="0.7"/>
<ellipse cx="835.3" cy="529.8" rx="6.0" ry="4.6" fill="#83a8a7" stroke="#111" stroke-width="0.7"/>
<ellipse cx="835.3" cy="529.0" rx="3.5" ry="2.6" fill="#90b9b6" stroke="#111" stroke-width="0.7"/>
<ellipse cx="750.0" cy="516.3" rx="52.0" ry="30.0" fill="none" stroke="#111" stroke-width="0.7"/>
<ellipse cx="751.0" cy="515.3" rx="48.5" ry="28.0" fill="none" stroke="#111" stroke-width="0.6"/>
<path d="M707.1 512.3L707.1 533.5A44.9 25.8 0 0 0 796.9 533.5L796.9 512.3A44.9 25.8 0 0 1 707.1 512.3Z" fill="url(#pedg)" stroke="#111" stroke-width="0.8"/>
<ellipse cx="752.0" cy="512.3" rx="44.9" ry="25.8" fill="#83a8a7" stroke="#111" stroke-width="0.8"/>
<ellipse cx="752.0" cy="511.3" rx="41.0" ry="23.5" fill="#83a8a7" stroke="#111" stroke-width="0.6"/>
<polygon points="682.0,534.6 710.0,519.3 723.1,553.4 698.8,569.2" fill="#8db4b2" stroke="#0a0a0a" stroke-width="1.0" stroke-linejoin="round" />
<polyline points="690.3,542.5 707.4,532.8" fill="none" stroke="#222" stroke-width="2.3" stroke-linecap="round" stroke-linejoin="round" />
<polyline points="690.3,542.5 707.4,532.8" fill="none" stroke="#8db4b2" stroke-width="1.3" stroke-linecap="round" stroke-linejoin="round" />
<polyline points="693.1,548.4 710.2,538.8" fill="none" stroke="#222" stroke-width="2.3" stroke-linecap="round" stroke-linejoin="round" />
<polyline points="693.1,548.4 710.2,538.8" fill="none" stroke="#8db4b2" stroke-width="1.3" stroke-linecap="round" stroke-linejoin="round" />
<polyline points="696.0,554.3 713.1,544.7" fill="none" stroke="#222" stroke-width="2.3" stroke-linecap="round" stroke-linejoin="round" />
<polyline points="696.0,554.3 713.1,544.7" fill="none" stroke="#8db4b2" stroke-width="1.3" stroke-linecap="round" stroke-linejoin="round" />
<polyline points="698.8,560.2 715.9,550.6" fill="none" stroke="#222" stroke-width="2.3" stroke-linecap="round" stroke-linejoin="round" />
<polyline points="698.8,560.2 715.9,550.6" fill="none" stroke="#8db4b2" stroke-width="1.3" stroke-linecap="round" stroke-linejoin="round" />
<polyline points="701.7,566.1 718.8,556.5" fill="none" stroke="#222" stroke-width="2.3" stroke-linecap="round" stroke-linejoin="round" />
<polyline points="701.7,566.1 718.8,556.5" fill="none" stroke="#8db4b2" stroke-width="1.3" stroke-linecap="round" stroke-linejoin="round" />
<path d="M714.4 503.0L714.4 509.0A32.2 18.6 0 0 0 778.8 509.0L778.8 503.0Z" fill="#747474" stroke="#111" stroke-width="0.8"/>
<path d="M714.4 497.8L714.4 503.8A32.2 18.6 0 0 0 778.8 503.8L778.8 497.8Z" fill="#5e5e5e" stroke="#111" stroke-width="0.8"/>
<path d="M714.4 492.6L714.4 498.6A32.2 18.6 0 0 0 778.8 498.6L778.8 492.6Z" fill="#747474" stroke="#111" stroke-width="0.8"/>
<path d="M714.4 487.4L714.4 493.4A32.2 18.6 0 0 0 778.8 493.4L778.8 487.4Z" fill="#5e5e5e" stroke="#111" stroke-width="0.8"/>
<path d="M714.4 482.2L714.4 488.2A32.2 18.6 0 0 0 778.8 488.2L778.8 482.2Z" fill="#747474" stroke="#111" stroke-width="0.8"/>
<path d="M714.4 477.0L714.4 483.0A32.2 18.6 0 0 0 778.8 483.0L778.8 477.0Z" fill="#5e5e5e" stroke="#111" stroke-width="0.8"/>
<rect x="714.4" y="470" width="64.4" height="13.0" fill="#6c6c6c"/>
<polygon points="685.4,403.3 717.0,385.4 730.1,391.9 701.2,409.4" fill="#c66363" stroke="#0a0a0a" stroke-width="1.0" stroke-linejoin="round" />
<polygon points="679.3,420.0 685.4,403.3 701.2,409.4 693.3,426.1" fill="#d97070" stroke="#0a0a0a" stroke-width="1.0" stroke-linejoin="round" />
<polygon points="679.3,420.0 693.3,426.1 690.7,458.5 679.3,451.5" fill="#c66363" stroke="#0a0a0a" stroke-width="1.0" stroke-linejoin="round" />
<polygon points="701.2,409.4 739.8,386.7 795.0,420.0 755.5,440.1" fill="#c66363" stroke="#0a0a0a" stroke-width="1.0" stroke-linejoin="round" />
<polygon points="688.9,434.9 701.2,409.4 755.5,440.1 744.1,465.5" fill="#d97070" stroke="#0a0a0a" stroke-width="1.0" stroke-linejoin="round" />
<polygon points="688.9,434.9 744.1,465.5 745.9,500.6 690.7,464.7" fill="#c66363" stroke="#0a0a0a" stroke-width="1.0" stroke-linejoin="round" />
<polyline points="689.8,438.0 743.8,468.5" fill="none" stroke="#0a0a0a" stroke-width="0.6" stroke-linecap="round" stroke-linejoin="round" />
<polygon points="755.5,440.1 795.0,420.0 798.5,422.6 762.5,441.0" fill="#d97070" stroke="#0a0a0a" stroke-width="0.6" stroke-linejoin="round" />
<polyline points="758.2,440.6 796.7,421.2" fill="none" stroke="#0a0a0a" stroke-width="0.5" stroke-linecap="round" stroke-linejoin="round" />
<polygon points="744.1,465.5 755.5,440.1 762.5,441.0 759.9,459.4 759.9,495.3 745.9,500.6" fill="#d97070" stroke="#0a0a0a" stroke-width="1.0" stroke-linejoin="round" />
<polyline points="749.4,466.1 759.0,442.7" fill="none" stroke="#0a0a0a" stroke-width="0.6" stroke-linecap="round" stroke-linejoin="round" />
<polyline points="752.9,466.1 761.3,443.6" fill="none" stroke="#0a0a0a" stroke-width="0.6" stroke-linecap="round" stroke-linejoin="round" />
<polyline points="749.4,466.1 749.7,498.8" fill="none" stroke="#0a0a0a" stroke-width="0.6" stroke-linecap="round" stroke-linejoin="round" />
<polyline points="752.9,466.1 753.3,497.6" fill="none" stroke="#0a0a0a" stroke-width="0.6" stroke-linecap="round" stroke-linejoin="round" />
<polyline points="756.4,462.9 756.8,496.6" fill="none" stroke="#0a0a0a" stroke-width="0.6" stroke-linecap="round" stroke-linejoin="round" />
<polyline points="744.1,465.5 749.4,466.1 752.9,466.1 756.4,462.9 759.9,459.4" fill="none" stroke="#0a0a0a" stroke-width="0.6" stroke-linecap="round" stroke-linejoin="round" />
<polygon points="755.5,440.1 763.8,439.8 764.8,449.2 759.9,461.1" fill="#d97070" stroke="#0a0a0a" stroke-width="0" stroke-linejoin="round" />
<polygon points="759.9,459.4 794.1,476.0 794.1,512.9 759.9,495.3" fill="#c66363" stroke="#0a0a0a" stroke-width="1.0" stroke-linejoin="round" />
<polygon points="759.9,459.4 763.4,448.0 798.5,470.8 794.1,476.0" fill="#d97070" stroke="#0a0a0a" stroke-width="1.0" stroke-linejoin="round" />
<polygon points="794.1,476.0 798.5,470.8 813.4,477.3 813.4,498.8 825.6,515.5 794.1,512.9" fill="#d06969" stroke="#0a0a0a" stroke-width="1.0" stroke-linejoin="round" />
<polyline points="798.5,503.2 813.4,498.8" fill="none" stroke="#0a0a0a" stroke-width="0.6" stroke-linecap="round" stroke-linejoin="round" />
<polyline points="798.5,503.2 796.7,510.2 823.0,515.5" fill="none" stroke="#0a0a0a" stroke-width="0.6" stroke-linecap="round" stroke-linejoin="round" />
<path d="M761.7 441L795 420L804.6 432.2L827.1 446.1Q838 452 840.8 462.500Q842 472 832.500 475.800Q822 478.600 812.500 477L798.500 470.800L763.400 448Z" fill="#c66363" stroke="#111" stroke-width="0.8" stroke-linejoin="round"/>
<path d="M800.500 468.800Q812 474.800 824 473.800Q838 471.500 838.200 463.500" fill="none" stroke="#111" stroke-width="0.6"/>
<polyline points="765.2,447.1 795.8,427.8 823.9,447.1" fill="none" stroke="#0a0a0a" stroke-width="0.6" stroke-linecap="round" stroke-linejoin="round" />
<polyline points="766.9,449.8 798.5,467.3 824.8,449.8" fill="none" stroke="#0a0a0a" stroke-width="1.4" stroke-linecap="round" stroke-linejoin="round" />
<polyline points="798.5,470.8 800.2,468.2 837.0,468.2" fill="none" stroke="#0a0a0a" stroke-width="0.6" stroke-linecap="round" stroke-linejoin="round" />
<path d="M797.6 469.6 Q823.0 475.2 839.7 465.5" fill="none" stroke="#111" stroke-width="1.3"/>
<ellipse cx="796.7" cy="434.0" rx="2.4" ry="1.6" fill="#e8b0b0" stroke="#111" stroke-width="0.6"/>
<ellipse cx="773.1" cy="447.5" rx="2.4" ry="1.6" fill="#e8b0b0" stroke="#111" stroke-width="0.6"/>
<ellipse cx="819.5" cy="447.1" rx="2.4" ry="1.6" fill="#e8b0b0" stroke="#111" stroke-width="0.6"/>
<ellipse cx="796.4" cy="460.6" rx="2.4" ry="1.6" fill="#e8b0b0" stroke="#111" stroke-width="0.6"/>
<ellipse cx="826.9" cy="465.0" rx="8.2" ry="6.2" fill="#bdbdbd" stroke="#111" stroke-width="0.7"/>
<ellipse cx="826.9" cy="462.8" rx="7.4" ry="5.4" fill="#cfcfcf" stroke="#111" stroke-width="0.7"/>
<ellipse cx="826.9" cy="462.8" rx="4.0" ry="2.9" fill="#b0b0b0" stroke="#111" stroke-width="0.6"/>
<polygon points="813.5,477.5 841.6,470.2 882.2,491.0 896.8,490.6 913.4,500.4 933.2,516.0 943.6,525.3 942.6,533.7 916.6,544.1 908.2,554.5 899.9,561.8 886.4,558.7 858.3,543.0 856.2,529.5 828.1,516.0 814.6,508.7" fill="#7b79a6" stroke="#0a0a0a" stroke-width="1.0" stroke-linejoin="round" />
<polygon points="813.5,477.5 828.1,486.8 828.1,516.0 814.6,508.7" fill="#706e9c" stroke="#0a0a0a" stroke-width="1.0" stroke-linejoin="round" />
<polyline points="816.2,484.8 822.5,488.3" fill="none" stroke="#0a0a0a" stroke-width="0.7" stroke-linecap="round" stroke-linejoin="round" />
<polyline points="816.2,491.0 822.5,494.5" fill="none" stroke="#0a0a0a" stroke-width="0.7" stroke-linecap="round" stroke-linejoin="round" />
<polyline points="816.2,497.2 822.5,500.8" fill="none" stroke="#0a0a0a" stroke-width="0.7" stroke-linecap="round" stroke-linejoin="round" />
<polyline points="816.2,503.5 822.5,507.0" fill="none" stroke="#0a0a0a" stroke-width="0.7" stroke-linecap="round" stroke-linejoin="round" />
<polyline points="828.1,486.8 841.6,479.6 841.6,470.2" fill="none" stroke="#0a0a0a" stroke-width="0.6" stroke-linecap="round" stroke-linejoin="round" />
<polygon points="828.1,486.8 858.3,504.5 858.3,543.0 856.2,529.5 828.1,516.0" fill="#7b79a6" stroke="#0a0a0a" stroke-width="1.0" stroke-linejoin="round" />
<polygon points="833.3,484.8 848.9,475.4 880.1,492.0 864.5,501.4" fill="#7b79a6" stroke="#0a0a0a" stroke-width="0.6" stroke-linejoin="round" />
<polygon points="864.5,501.4 880.1,492.0 896.8,492.0 911.4,501.4 878.1,520.1 863.5,511.8" fill="#7b79a6" stroke="#0a0a0a" stroke-width="0.6" stroke-linejoin="round" />
<polyline points="858.3,504.5 863.5,511.8 878.1,520.1 913.4,502.4" fill="none" stroke="#0a0a0a" stroke-width="0.7" stroke-linecap="round" stroke-linejoin="round" />
<polygon points="858.3,514.9 878.1,523.3 908.2,552.4 899.9,561.8 886.4,558.7 858.3,543.0" fill="#7b79a6" stroke="#0a0a0a" stroke-width="1.0" stroke-linejoin="round" />
<polyline points="878.1,523.3 915.5,503.5 915.5,520.1" fill="none" stroke="#0a0a0a" stroke-width="0.7" stroke-linecap="round" stroke-linejoin="round" />
<ellipse cx="835.0" cy="484.8" rx="1.4" ry="1.1" fill="#222" stroke="#111" stroke-width="0.3"/>
<ellipse cx="849.5" cy="477.1" rx="1.4" ry="1.1" fill="#222" stroke="#111" stroke-width="0.3"/>
<ellipse cx="864.9" cy="501.4" rx="1.4" ry="1.1" fill="#222" stroke="#111" stroke-width="0.3"/>
<ellipse cx="864.5" cy="510.8" rx="1.4" ry="1.1" fill="#222" stroke="#111" stroke-width="0.3"/>
<ellipse cx="878.7" cy="493.1" rx="1.4" ry="1.1" fill="#222" stroke="#111" stroke-width="0.3"/>
<ellipse cx="878.1" cy="518.7" rx="1.4" ry="1.1" fill="#222" stroke="#111" stroke-width="0.3"/>
<ellipse cx="893.7" cy="493.1" rx="1.4" ry="1.1" fill="#222" stroke="#111" stroke-width="0.3"/>
<ellipse cx="908.2" cy="501.4" rx="1.4" ry="1.1" fill="#222" stroke="#111" stroke-width="0.3"/>
<ellipse cx="892.6" cy="509.7" rx="1.4" ry="1.1" fill="#222" stroke="#111" stroke-width="0.3"/>
<polygon points="914.1,505.7 917.9,503.5 937.6,517.2 943.6,523.2 944.4,527.1 942.5,531.5 938.7,528.7 933.2,518.3 924.5,516.7 915.7,522.2 914.1,523.2" fill="#7b79a6" stroke="#0a0a0a" stroke-width="0.7" stroke-linejoin="round" />
<polyline points="915.7,505.7 935.4,517.8 941.4,523.8 942.2,528.2" fill="none" stroke="#0a0a0a" stroke-width="0.5" stroke-linecap="round" stroke-linejoin="round" />
<polygon points="895.4,533.7 915.7,522.2 924.5,516.7 931.0,516.7 936.5,523.8 945.3,535.3 946.9,538.0 937.6,546.8 931.6,563.2 926.6,564.3 909.7,555.6 908.0,545.7 905.3,541.3" fill="#dba869" stroke="#0a0a0a" stroke-width="1.0" stroke-linejoin="round" />
<polygon points="915.7,522.2 924.5,516.7 931.0,516.7 937.6,526.0 924.5,523.8 909.7,531.5 906.9,528.2" fill="#e3b57b" stroke="#0a0a0a" stroke-width="0.6" stroke-linejoin="round" />
<polygon points="909.7,531.5 924.5,523.8 945.3,535.3 930.5,544.6" fill="#e3b57b" stroke="#0a0a0a" stroke-width="0.7" stroke-linejoin="round" />
<polygon points="909.7,531.5 930.5,544.6 926.6,564.3 909.7,555.6" fill="#dba869" stroke="#0a0a0a" stroke-width="0.7" stroke-linejoin="round" />
<polygon points="930.5,544.6 945.3,535.3 946.9,538.0 937.6,546.8 931.6,563.2 926.6,564.3" fill="#cf9c5e" stroke="#0a0a0a" stroke-width="0.7" stroke-linejoin="round" />
<polyline points="909.7,545.7 928.3,555.6" fill="none" stroke="#0a0a0a" stroke-width="0.5" stroke-linecap="round" stroke-linejoin="round" />
<polyline points="895.4,533.7 906.9,528.2 909.7,531.5" fill="none" stroke="#0a0a0a" stroke-width="0.6" stroke-linecap="round" stroke-linejoin="round" />
<polyline points="914.6,532.2 925.6,526.8" fill="none" stroke="#1a1a1a" stroke-width="1.7" stroke-linecap="round" stroke-linejoin="round" />
<polyline points="920.6,535.3 931.2,529.9" fill="none" stroke="#1a1a1a" stroke-width="1.7" stroke-linecap="round" stroke-linejoin="round" />
<polyline points="926.4,538.3 936.3,533.0" fill="none" stroke="#1a1a1a" stroke-width="1.7" stroke-linecap="round" stroke-linejoin="round" />
<polyline points="931.2,541.0 940.9,536.1" fill="none" stroke="#1a1a1a" stroke-width="1.7" stroke-linecap="round" stroke-linejoin="round" />
<polygon points="879.6,524.9 896.0,534.2 905.3,541.3 908.0,551.2 904.7,559.4 898.2,561.9 886.1,556.6 871.9,550.1 871.9,531.5" fill="#7b79a6" stroke="#0a0a0a" stroke-width="0" stroke-linejoin="round" />
<polyline points="879.6,524.9 896.0,534.2 905.3,541.3 908.0,551.2 904.7,559.4 898.2,561.9 886.1,556.6 871.9,550.1" fill="none" stroke="#0a0a0a" stroke-width="0.8" stroke-linecap="round" stroke-linejoin="round" />
<polyline points="893.2,534.7 901.5,541.3 903.9,550.1 901.5,558.3" fill="none" stroke="#0a0a0a" stroke-width="0.5" stroke-linecap="round" stroke-linejoin="round" />
<ellipse cx="890.6" cy="551.0" rx="7.9" ry="9.6" fill="#626262" stroke="#111" stroke-width="0.7" transform="rotate(-18 890.6 551.0)"/>
<ellipse cx="892.1" cy="551.0" rx="6.4" ry="8.0" fill="#7e7e7e" stroke="#111" stroke-width="0.7" transform="rotate(-18 892.1 551.0)"/>
<ellipse cx="892.6" cy="551.0" rx="3.6" ry="4.6" fill="#5c5c5c" stroke="#111" stroke-width="0.6" transform="rotate(-18 892.6 551.0)"/>
<ellipse cx="892.8" cy="551.0" rx="1.6" ry="2.1" fill="#777" stroke="#111" stroke-width="0.5" transform="rotate(-18 892.8 551.0)"/>
<polygon points="924.3,570.7 932.2,563.2 935.5,549.4 944.7,538.3 956.5,533.9 965.7,536.3 974.9,541.6 982.2,544.8 984.1,550.8 990.7,561.3 992.0,567.8 984.8,574.4 992.7,576.4 993.3,584.9 981.5,590.2 971.0,592.8 950.0,587.6 942.1,583.6 934.8,581.0 924.3,575.7" fill="#92d4ab" stroke="#0a0a0a" stroke-width="1.0" stroke-linejoin="round" />
<path d="M942.1 565.2 Q943.4 545.5 965.7 536.3" fill="none" stroke="#111" stroke-width="0.7"/>
<path d="M945.4 566.5 Q946.7 547.5 968.4 538.3" fill="none" stroke="#111" stroke-width="0.7"/>
<polygon points="943.4,565.9 952.6,571.8 978.9,575.7 992.0,567.8 990.7,561.3 984.1,550.8 973.6,542.9 952.6,553.4" fill="#92d4ab" stroke="#0a0a0a" stroke-width="0.7" stroke-linejoin="round" />
<polygon points="924.3,570.7 932.2,565.2 940.8,569.2 934.8,575.7 934.8,581.0 924.3,575.7" fill="#84c49c" stroke="#0a0a0a" stroke-width="0.7" stroke-linejoin="round" />
<polyline points="942.1,565.2 942.1,583.6" fill="none" stroke="#0a0a0a" stroke-width="0.7" stroke-linecap="round" stroke-linejoin="round" />
<polyline points="952.6,571.8 951.3,581.0 973.6,578.4" fill="none" stroke="#0a0a0a" stroke-width="0.6" stroke-linecap="round" stroke-linejoin="round" />
<polygon points="952.6,555.4 965.1,547.9 980.2,559.3 968.4,567.8" fill="#8e8e8e" stroke="#0a0a0a" stroke-width="0.7" stroke-linejoin="round" />
<polygon points="952.6,555.4 965.1,547.9 973.6,554.0 961.8,561.9" fill="#9f9f9f" stroke="#0a0a0a" stroke-width="0.6" stroke-linejoin="round" />
<ellipse cx="975.6" cy="549.4" rx="1.7" ry="1.2" fill="#333" stroke="#111" stroke-width="0.4"/>
<ellipse cx="950.0" cy="563.9" rx="1.7" ry="1.2" fill="#333" stroke="#111" stroke-width="0.4"/>
<ellipse cx="957.2" cy="565.0" rx="1.7" ry="1.2" fill="#333" stroke="#111" stroke-width="0.4"/>
<ellipse cx="987.4" cy="566.5" rx="1.7" ry="1.2" fill="#333" stroke="#111" stroke-width="0.4"/>
<ellipse cx="978.2" cy="571.5" rx="1.7" ry="1.2" fill="#333" stroke="#111" stroke-width="0.4"/>
<polygon points="988.1,555.0 997.3,554.0 999.3,557.3 994.7,560.6 988.7,558.6" fill="#d9c75e" stroke="#0a0a0a" stroke-width="0.6" stroke-linejoin="round" />
<polygon points="950.0,575.1 958.5,574.4 959.8,578.4 952.6,581.7 949.7,579.7" fill="#d9c75e" stroke="#0a0a0a" stroke-width="0.6" stroke-linejoin="round" />
<polygon points="992.7,561.9 1001.2,556.7 1021.0,565.2 1042.7,575.7 1016.4,571.8 1014.4,575.7 999.9,567.8" fill="#4b87c9" stroke="#0a0a0a" stroke-width="1.0" stroke-linejoin="round" />
<polyline points="997.3,562.6 1013.1,569.8" fill="none" stroke="#0a0a0a" stroke-width="0.6" stroke-linecap="round" stroke-linejoin="round" />
<polyline points="999.9,560.0 1015.7,567.2" fill="none" stroke="#0a0a0a" stroke-width="0.6" stroke-linecap="round" stroke-linejoin="round" />
<polygon points="1015.7,571.5 1042.7,576.1 1042.7,586.9 1038.0,587.6 1015.7,579.7" fill="#111" stroke="#0a0a0a" stroke-width="1.0" stroke-linejoin="round" />
<polygon points="1038.0,578.4 1042.7,576.4 1042.7,586.9 1038.0,587.6" fill="#555" stroke="#0a0a0a" stroke-width="0.5" stroke-linejoin="round" />
<polygon points="1007.8,572.8 1015.7,573.8 1015.7,577.1 1009.1,576.4" fill="#4b87c9" stroke="#0a0a0a" stroke-width="0.6" stroke-linejoin="round" />
<polygon points="992.0,571.8 1013.1,566.8 1015.7,569.2 1014.4,571.5 994.0,575.7" fill="#e21c1c" stroke="#0a0a0a" stroke-width="0.6" stroke-linejoin="round" />
<polygon points="984.1,576.8 986.8,574.7 1010.4,573.1 1011.8,575.7 989.4,579.9 984.8,579.4" fill="#e21c1c" stroke="#0a0a0a" stroke-width="0.6" stroke-linejoin="round" />
<polygon points="973.6,578.4 980.9,579.4 976.9,592.2 970.3,593.1" fill="#e21c1c" stroke="#0a0a0a" stroke-width="0.6" stroke-linejoin="round" />
<polyline points="977.6,579.0 973.6,592.6" fill="none" stroke="#0a0a0a" stroke-width="0.5" stroke-linecap="round" stroke-linejoin="round" />
<polygon points="950.6,587.6 955.2,584.3 968.4,594.1 981.5,592.2 991.4,606.6 990.7,616.5 986.8,615.8 968.4,602.0 952.6,592.2" fill="#4b87c9" stroke="#0a0a0a" stroke-width="1.0" stroke-linejoin="round" />
<polygon points="968.4,594.1 981.5,592.2 991.4,606.6 968.4,602.0" fill="#5a95d6" stroke="#0a0a0a" stroke-width="0.6" stroke-linejoin="round" />
<polyline points="968.4,594.1 968.4,602.0" fill="none" stroke="#0a0a0a" stroke-width="0.7" stroke-linecap="round" stroke-linejoin="round" />
<polyline points="991.4,606.6 986.8,607.9 986.8,615.8" fill="none" stroke="#0a0a0a" stroke-width="0.6" stroke-linecap="round" stroke-linejoin="round" />
<polyline points="952.6,588.9 986.8,607.9" fill="none" stroke="#0a0a0a" stroke-width="0.6" stroke-linecap="round" stroke-linejoin="round" />
<polygon points="1206.4,266.5 1210.8,264.7 1206.4,272.8" fill="#979797"/>
<polygon points="1281.4,264.7 1285.8,267.2 1285.8,272.8" fill="#979797"/>
<polygon points="1241.0,332.7 1251.1,332.7 1246.1,336.1" fill="#979797"/>
<polygon points="1210.8,264.7 1246.1,244.5 1281.4,264.7 1246.1,284.2" fill="#b0b0b0"/>
<polygon points="1206.4,272.8 1210.8,264.7 1246.1,284.2 1241.0,292.4" fill="#cccccc"/>
<polygon points="1246.1,284.2 1281.4,264.7 1285.8,272.8 1251.1,292.4" fill="#d0d0d0"/>
<polygon points="1246.1,284.2 1241.0,292.4 1251.1,292.4" fill="#ececec"/>
<polygon points="1206.4,272.8 1241.0,292.4 1241.0,332.7 1206.4,312.5" fill="#afafaf"/>
<polygon points="1241.0,292.4 1251.1,292.4 1251.1,332.7 1241.0,332.7" fill="#d3d3d3"/>
<polygon points="1251.1,292.4 1285.8,272.8 1285.8,312.5 1251.1,332.7" fill="#b1b1b1"/>
<text x="0" y="0" transform="translate(1244.2 264.7) rotate(30) skewX(-30)" font-family="Liberation Sans, sans-serif" font-size="6.6" fill="#666" text-anchor="middle">Top</text>
<text x="0" y="0" transform="translate(1221.8 306.6) skewY(28)" font-family="Liberation Sans, sans-serif" font-size="6.6" fill="#666" text-anchor="middle">Front</text>
<text x="0" y="0" transform="translate(1269.4 307.1) skewY(-30)" font-family="Liberation Sans, sans-serif" font-size="6.6" fill="#666" text-anchor="middle">Right</text>
<path d="M364.0 842.6L364.0 821" stroke="#1ec81e" stroke-width="2.6" fill="none"/>
<polygon points="360.7,822 367.3,822 364.0,813.5" fill="#1ec81e"/>
<path d="M364.0 842.6L382 851" stroke="#d41414" stroke-width="2.6" fill="none"/>
<polygon points="380.6,847.2 378.2,853.4 388,854" fill="#d41414"/>
<path d="M364.0 842.6L346.5 851.3" stroke="#1414c8" stroke-width="2.6" fill="none"/>
<polygon points="347.6,847.6 349.8,853.8 340.5,854.2" fill="#1414c8"/>
<circle cx="364.0" cy="842.6" r="1.6" fill="#ddd"/>
<text x="367.5" y="811" font-family="Liberation Serif, serif" font-size="11.5" fill="#555" text-anchor="middle">Y</text>
<text x="395.8" y="856" font-family="Liberation Serif, serif" font-size="11.5" fill="#555" text-anchor="middle">X</text>
<text x="338.5" y="855.5" font-family="Liberation Serif, serif" font-size="11.5" fill="#555" text-anchor="middle">Z</text>
<g stroke="#555" fill="none" stroke-width="1.1"><path d="M756 218.3L760.6 222.8" stroke-width="1.4"/><circle cx="749.4" cy="211.4" r="9.3" fill="#fff"/><path d="M744.6 210v-3.4h3.4M751 206.6h3.4v3.4M754.4 213v3.4h-3.4M748 216.4h-3.4v-3.4" stroke-width="1.3"/></g>
<g stroke="#555" fill="none" stroke-width="1.1"><path d="M789 218.3L793.6 222.8" stroke-width="1.4"/><circle cx="782.4" cy="211.4" r="9.3" fill="#fff"/><path d="M777.6 210v-3.4h3.4M784 206.6h3.4v3.4M787.4 213v3.4h-3.4M781 216.4h-3.4v-3.4" stroke-width="1.3"/><rect x="780.6" y="209.6" width="3.6" height="3.6" stroke-width="1.2"/></g>
<g stroke="#555" fill="#fff" stroke-width="1.1" stroke-linejoin="round"><path d="M816.2 201.5v4M805.5 220.5l3.5-2M826.9 220.5l-3.5-2" fill="none"/><path d="M816.2 205.2l7.4 4.2v8.6l-7.4 4.3l-7.4-4.3v-8.6z"/><path d="M808.8 209.4l7.4 4.2l7.4-4.2M816.2 213.6v8.6" fill="none"/></g>
<g stroke="#555" fill="#fff" stroke-width="1.2" stroke-linejoin="round"><path d="M839.2 208.6l6.6-6.4h13.2v13.4l-6.6 6.6h-13.2z"/><path d="M839.2 208.6h13.2v13.6M852.4 208.6l6.6-6.4" fill="none"/></g>
<g stroke="#555" fill="#fff" stroke-width="1.2" stroke-linejoin="round"><path d="M871.8 208.6l6.6-6.4h13.2v13.4l-6.6 6.6h-13.2z"/><path d="M871.8 208.6h13.2v13.6M885 208.6l6.6-6.4M878.4 202.2v13.4h13.2M878.4 215.6l-6.6 6.6" fill="none" stroke-width="1"/></g>
<g stroke="#555" fill="#fff" stroke-width="1.2"><path d="M905.8 212c3-4.2 6.2-6 9.4-6s6.4 1.8 9.4 6c-3 4.2-6.2 6-9.4 6s-6.4-1.800-9.4-6z"/><circle cx="915.2" cy="212" r="2.6"/></g>
</svg>
<!--/VIEW-->
</div>
<div id="status" class="abs"></div>

<div class="sl" style="left:5px;top:195px">模型浏览器</div>
<div class="abs" style="left:64px;top:220px;width:254px;height:30px;background:#fdfdfd;border:1px solid #d9d9d9;border-radius:3px"></div>
<div class="sl" style="left:68px;top:226px">物体</div>
<div class="abs" style="left:3px;top:255px;width:314px;height:25px;background:#fff;border-bottom:1px solid #8a8a8a;border-radius:3px 3px 0 0"></div>
<div class="sl" style="left:36px;top:258px;color:#8c8c8c">搜索模型浏览器</div>
<div class="abs" style="left:0;top:283px;width:319px;height:600px;background:#f0f0f0;border:1px solid #a3a3a3;box-shadow:inset 1px 1px 0 #fbfbfb"></div>
<div class="sl" style="left:56px;top:288px">物体</div>
<div class="sl" style="left:1351px;top:195px">属性</div>
<div class="abs" style="left:1346px;top:217px;width:320px;height:666px;background:#f0f0f0;border:1px solid #a3a3a3"></div>
<div class="sl" style="left:6px;top:890px;color:#fff">就绪</div>
<div class="sl" id="coords" style="left:1339px;top:890px;color:#111;white-space:pre;font-size:15.5px;letter-spacing:0.29px">X = 0.000000  Y = 0.000000  Z = 0.000000</div>
<!--PANEL-ICONS-->
<svg class="abs" style="left:0;top:0;pointer-events:none" width="1666" height="913" viewBox="0 0 1666 913">
<g fill="none" stroke="#111" stroke-width="1.200"><path d="M291.1 201.300v-1.900h7.600v7.500h-1.900"/><rect x="289.3" y="201.300" width="7.500" height="7.400" fill="none"/><path d="M306.1 199.200l9.800 9.700M315.90000000000003 199.200l-9.800 9.700" stroke-width="1.100"/></g>
<g fill="none" stroke="#111" stroke-width="1.200"><path d="M1637.3 201.300v-1.900h7.600v7.500h-1.900"/><rect x="1635.5" y="201.300" width="7.500" height="7.400" fill="none"/><path d="M1652.3 199.200l9.800 9.700M1662.1 199.200l-9.800 9.700" stroke-width="1.100"/></g>
<path d="M6.700 223.600v20.300h21.200" fill="none" stroke="#3aa86a" stroke-width="1.100" stroke-dasharray="1.100 1.100"/>
<rect x="10.600" y="223.700" width="17.200" height="16.900" fill="#fff" stroke="#555" stroke-width="1.300"/><path d="M19.200 227.600v9.200M14.600 232.200h9.200" stroke="#2e8b57" stroke-width="1.500"/>
<g fill="#fff" stroke="#333" stroke-width="1.400" stroke-linejoin="round"><path d="M46.700 223.600l9.200 5.500v9.600l-9.200 5.500l-9.200-5.500v-9.600z"/><path d="M37.500 229.100l9.200 5.600l9.200-5.600M46.700 234.700v9.500" fill="none"/></g>
<path d="M50.600 233.400h8l-3 5.800v5.200l-2-1.400v-3.800z" fill="#a8d4f7" stroke="#2b88d8" stroke-width="1" stroke-linejoin="round"/>
<path d="M302.400 232.400l4 4l4-4" fill="none" stroke="#444" stroke-width="1.100"/>
<circle cx="18.800" cy="265.600" r="7.400" fill="none" stroke="#3aa86a" stroke-width="1.200"/><path d="M24.200 271l5 4.600" stroke="#3aa86a" stroke-width="1.200"/>
<path d="M11.800 293.500l5 4.400l-5 4.400" fill="none" stroke="#666" stroke-width="1.300"/>
<path d="M34.800 291.500v10.300h3M34.800 295.200h7.500" fill="none" stroke="#777" stroke-width="1.100"/>
<path d="M31.400 288.400h6.800l-3.400 3.600z" fill="#f4a0a8" stroke="#d0203a" stroke-width="0.900" stroke-linejoin="round"/>
<path d="M41.900 291v4.600a3.700 1.400 0 0 0 7.400 0v-4.600" fill="#cfe6fa" stroke="#2b88d8" stroke-width="0.900"/><ellipse cx="45.600" cy="291" rx="3.700" ry="1.400" fill="#e6f3fd" stroke="#2b88d8" stroke-width="0.900"/>
<g fill="#f7d677" stroke="#d9a520" stroke-width="0.900" stroke-linejoin="round"><path d="M41.200 297.300l4.100 2.100v4.300l-4.100 2.100l-4.100-2.100v-4.300z"/><path d="M37.100 299.400l4.100 2.100l4.100-2.100M41.200 301.500v4.300" fill="none"/></g>
<rect x="1662" y="910" width="2" height="2" fill="#7fb0e6"/>
<rect x="1658" y="910" width="2" height="2" fill="#7fb0e6"/>
<rect x="1654" y="910" width="2" height="2" fill="#7fb0e6"/>
<rect x="1662" y="906" width="2" height="2" fill="#7fb0e6"/>
<rect x="1658" y="906" width="2" height="2" fill="#7fb0e6"/>
<rect x="1662" y="902" width="2" height="2" fill="#7fb0e6"/>
</svg>
<!--/PANEL-ICONS-->
<div class="sl" style="left:1558px;top:43px">窗口</div>

</body>
</html>
